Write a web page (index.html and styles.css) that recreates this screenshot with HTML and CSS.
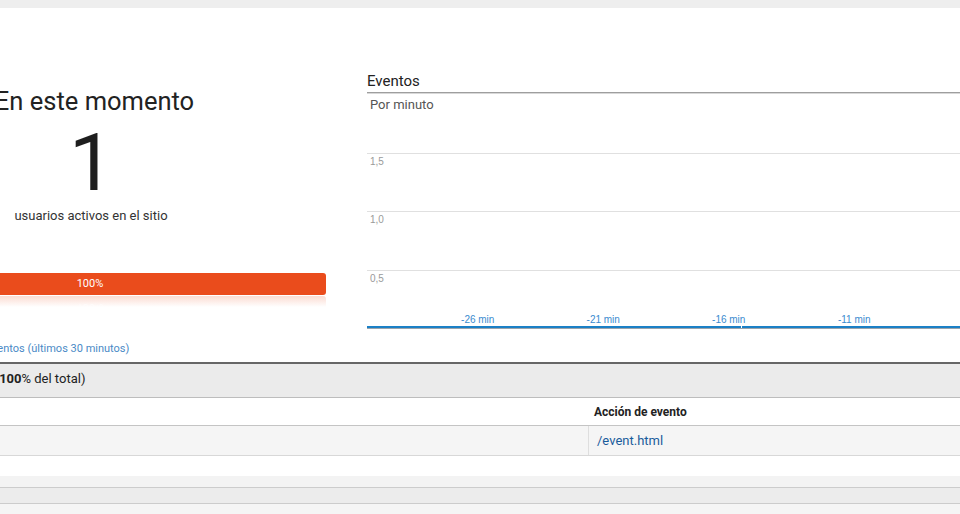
FILE: index.html
```html
<!DOCTYPE html>
<html lang="es">
<head>
<meta charset="utf-8">
<title>Tiempo real - Eventos</title>
<link rel="stylesheet" href="styles.css">
</head>
<body>
<div class="topbar"></div>
<div class="main">
  <section class="now">
    <h2 class="now-title">En este momento</h2>
    <div class="now-count">1</div>
    <div class="now-sub">usuarios activos en el sitio</div>
    <div class="bar"><span>100%</span></div>
    <div class="bar-reflect"><span>100%</span></div>
    <a class="now-link">Eventos (últimos 30 minutos)</a>
  </section>
  <section class="events">
    <div class="tabs"><span class="tab">Eventos</span></div>
    <div class="per">Por minuto</div>
    <div class="chart">
      <div class="grow g1"><span class="ylab">1,5</span></div>
      <div class="grow g2"><span class="ylab">1,0</span></div>
      <div class="grow g3">
        <span class="ylab">0,5</span>
        <div class="ticks">
          <span class="tick">-26 min</span>
          <span class="tick">-21 min</span>
          <span class="tick">-16 min</span>
          <span class="tick">-11 min</span>
        </div>
      </div>
      <div class="axis"></div>
    </div>
  </section>
</div>
<div class="table">
  <div class="summary"><span class="summary-text">Eventos: 1 (<b>100</b>% del total)</span></div>
  <div class="trow thead">
    <div class="cell c1"></div>
    <div class="cell c2">Acción de evento</div>
  </div>
  <div class="trow tdata">
    <div class="cell c1"></div>
    <div class="cell c2 divided"><a class="lnk">/event.html</a></div>
  </div>
  <div class="trow blank"></div>
  <div class="trow f1"></div>
  <div class="trow f2"></div>
  <div class="trow f3"></div>
</div>
</body>
</html>
```
FILE: styles.css
```css
html, body {
  margin: 0;
  padding: 0;
  background: #fff;
}
body {
  width: 960px;
  height: 514px;
  overflow: hidden;
  font-family: Roboto, "Liberation Sans", Arial, sans-serif;
  color: #222;
}
.topbar {
  height: 8px;
  background: #eeeeee;
}
.main {
  display: flex;
  align-items: flex-start;
  margin-left: -146px;
  height: 354px;
}
.now {
  width: 472px;
  flex: none;
  padding-top: 78px;
  text-align: center;
}
.now-title {
  margin: 0;
  font-size: 25.5px;
  line-height: 30px;
  font-weight: 400;
  color: #222;
  padding-left: 9px;
}
.now-count {
  margin-top: 7px;
  font-size: 80px;
  line-height: 80px;
  font-weight: 400;
  color: #1e1e1e;
  padding-left: 3px;
}
.now-sub {
  margin-top: 5px;
  font-size: 13px;
  line-height: 16px;
  color: #333;
  padding-left: 2px;
}
.bar {
  margin-top: 49px;
  height: 22px;
  background: #ea4c1c;
  border-radius: 0 3px 3px 0;
  color: #fff;
  font-size: 11px;
  line-height: 22px;
}
.bar-reflect {
  margin-top: 1px;
  height: 11px;
  overflow: hidden;
  background: linear-gradient(rgba(234, 76, 28, 0.2), rgba(255, 255, 255, 0));
  border-radius: 0 3px 0 0;
  color: rgba(255, 255, 255, 0.6);
  font-size: 11px;
  line-height: 22px;
}
.bar-reflect span {
  display: inline-block;
  transform: scaleY(-1);
  margin-top: -12px;
}
.now-link {
  display: block;
  margin-top: 35px;
  text-align: left;
  padding-left: 132px;
  font-size: 11px;
  line-height: 14px;
  color: #4a8ac6;
}
.events {
  flex: 1;
  margin-left: 41px;
  padding-top: 64px;
}
.tabs {
  border-bottom: 1px solid #9e9e9e;
  box-shadow: 0 1px 0 #d8d8d8;
  padding-bottom: 2px;
}
.tab {
  display: block;
  font-size: 15px;
  line-height: 18px;
  color: #222;
}
.per {
  margin-top: 4px;
  padding-left: 3px;
  font-size: 13px;
  line-height: 16px;
  color: #555;
}
.chart {
  position: relative;
  margin-top: 40px;
}
.grow {
  box-sizing: border-box;
  border-top: 1px solid #e0e0e0;
  padding: 2px 0 0 3px;
}
.g1 { height: 58px; }
.g2 { height: 59px; }
.g3 {
  height: 56px;
  display: flex;
  flex-direction: column;
  justify-content: space-between;
  padding-left: 0;
}
.g3 .ylab { padding-left: 3px; }
.ylab {
  display: block;
  font-family: "Liberation Sans", Arial, sans-serif;
  font-size: 10px;
  line-height: 12px;
  color: #9a9a9a;
}
.ticks {
  display: flex;
  padding-left: 48px;
}
.tick {
  width: 125.5px;
  flex: none;
  text-align: center;
  font-family: "Liberation Sans", Arial, sans-serif;
  font-size: 10px;
  line-height: 12px;
  color: #3b8bcf;
}
.axis {
  position: relative;
  height: 2px;
  background: #1b80c6;
  border-bottom: 1px solid #9aa4ad;
}
.axis::after {
  content: "";
  position: absolute;
  left: 374px;
  top: -2px;
  width: 1px;
  height: 4px;
  background: #fff;
}
.table {
  border-top: 2px solid #666;
}
.summary {
  height: 34px;
  box-sizing: border-box;
  background: #ebebeb;
  border-bottom: 1px solid #bdbdbd;
  padding-top: 7px;
  font-size: 13px;
  line-height: 16px;
  color: #222;
  white-space: nowrap;
}
.summary-text {
  display: inline-block;
  margin-left: -68px;
}
.trow {
  display: flex;
  box-sizing: border-box;
}
.cell.c1 {
  width: 588px;
  flex: none;
}
.cell.c2 {
  flex: 1;
}
.thead {
  height: 28px;
  background: #fff;
  border-bottom: 1px solid #c4c4c4;
}
.thead .c2 {
  padding-left: 6px;
  font-size: 12px;
  line-height: 16px;
  padding-top: 6px;
  font-weight: 700;
  color: #222;
}
.tdata {
  height: 30px;
  background: #f5f5f5;
  border-bottom: 1px solid #d8d8d8;
}
.tdata .c2 {
  padding-left: 8px;
  padding-top: 7px;
  font-size: 13px;
  line-height: 16px;
}
.divided {
  border-left: 1px solid #dedede;
}
.lnk {
  color: #1a5c9c;
}
.blank {
  height: 20px;
  background: #fff;
}
.f1 {
  height: 12px;
  background: #f3f3f3;
  border-bottom: 1px solid #cccccc;
}
.f2 {
  height: 16px;
  background: #ececec;
  border-bottom: 1px solid #cccccc;
}
.f3 {
  height: 11px;
  background: #f5f5f5;
}
```
